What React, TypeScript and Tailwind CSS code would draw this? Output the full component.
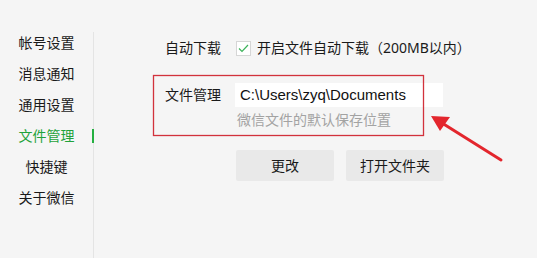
import React from "react";

const navItems = ["帐号设置", "消息通知", "通用设置", "文件管理", "快捷键", "关于微信"];

const font = {
  fontFamily: '"Microsoft YaHei", "Noto Sans", "Noto Sans CJK SC", sans-serif',
};

const App = () => {
  return (
    <div
      className="relative flex w-[537px] h-[258px] overflow-hidden bg-[#f5f5f5] text-[14px] text-[#1a1a1a]"
      style={font}
    >
      {/* sidebar */}
      <div className="flex flex-col w-[93px] pt-[27px]">
        {navItems.map((item) => (
          <div
            key={item}
            className={`relative h-[31px] flex items-center justify-center leading-none ${
              item === "文件管理" ? "text-[#1fa33b]" : ""
            }`}
          >
            {item}
            {item === "文件管理" && (
              <span className="absolute right-[-1px] top-[9px] w-[2px] h-[14px] bg-[#25b041]" />
            )}
          </div>
        ))}
      </div>
      <div className="w-px mt-[32px] bg-[#e4e4e4]" />

      {/* content */}
      <div className="pl-[71px] pt-[40px] flex flex-col">
        <div className="flex items-center h-[16px]">
          <span className="w-[71px] leading-none">自动下载</span>
          <span className="flex items-center justify-center w-[15px] h-[15px] bg-white shadow-[inset_0_0_0_1px_#d6d6d6]">
            <svg width="11" height="9" viewBox="0 0 11 9">
              <path d="M1 4.5 L4 7.5 L10 1" fill="none" stroke="#3cb35a" strokeWidth="1.2" />
            </svg>
          </span>
          <span className="ml-[6px] leading-none">开启文件自动下载（200MB以内）</span>
        </div>

        <div className="flex mt-[27px]">
          <span className="w-[70px] pt-[5px] leading-none">文件管理</span>
          <div className="flex flex-col">
            <div className="w-[208px] h-[24px] bg-white flex items-center pl-[5px] text-[15px] text-[#111] font-['Liberation_Sans',sans-serif]">
              C:\Users\zyq\Documents
            </div>
            <div className="mt-[6px] pl-[2px] text-[14px] leading-none text-[#a3a3a3]">
              微信文件的默认保存位置
            </div>
          </div>
        </div>

        <div className="flex gap-[12px] mt-[23px] ml-[71px]">
          <button className="w-[98px] h-[31px] bg-[#e9e9e9] rounded-[2px] text-[14px]">更改</button>
          <button className="w-[98px] h-[31px] bg-[#e9e9e9] rounded-[2px] text-[14px]">打开文件夹</button>
        </div>
      </div>

      {/* annotation overlay: red box + arrow */}
      <svg className="absolute left-0 top-0 pointer-events-none" width="537" height="258">
        <rect x="153.5" y="75.5" width="270" height="60" fill="none" stroke="#d2323c" strokeWidth="1.3" />
        <line x1="501" y1="160" x2="442" y2="123" stroke="#e3262d" strokeWidth="3" strokeLinecap="round" />
        <polygon points="431,116 450,117 440,131" fill="#e3262d" />
      </svg>
    </div>
  );
};

export default App;
